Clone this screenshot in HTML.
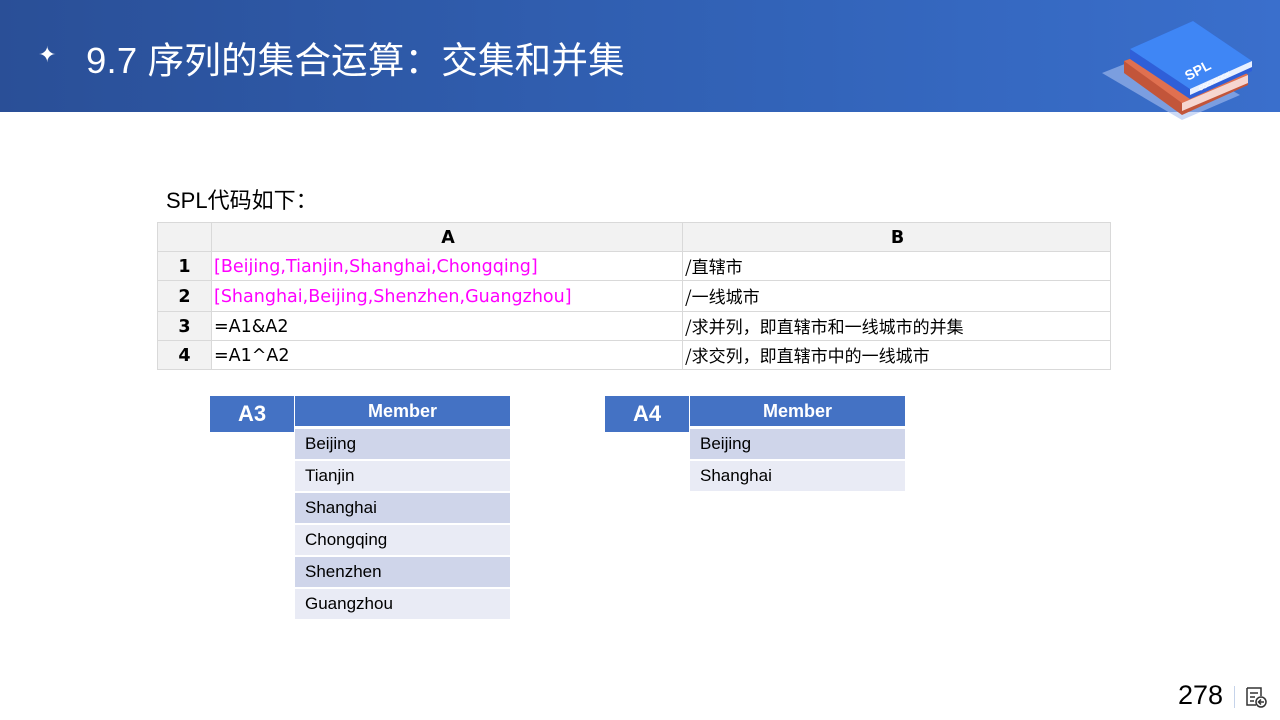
<!DOCTYPE html>
<html><head><meta charset="utf-8"><style>
body{margin:0;width:1280px;height:720px;position:relative;background:#fff;font-family:"Liberation Sans","Noto Sans CJK SC",sans-serif;overflow:hidden}
.hdr{position:absolute;left:0;top:0;width:1280px;height:112px;background:linear-gradient(90deg,#2a4f97 0%,#3263b8 60%,#3a6fcc 100%)}
.title{position:absolute;left:86px;top:31px;color:#fff;font-size:36.5px;white-space:nowrap;letter-spacing:0.2px}
.star{position:absolute;left:38px;top:42px;color:#fff;font-size:22px}
.abs{position:absolute;white-space:nowrap}
table.g{position:absolute;left:157px;top:222px;border-collapse:collapse;font-size:17.5px;font-family:"DejaVu Sans","Noto Sans CJK SC",sans-serif;table-layout:fixed}
table.g td{border:1px solid #d9d9d9;padding:2px 0 0 2px;height:26px;line-height:26px;vertical-align:middle;white-space:nowrap;overflow:hidden}
table.g td.c{font-family:"Noto Sans CJK SC",sans-serif;font-size:17px;padding-top:0}
table.g td.n{background:#f2f2f2;text-align:center;font-weight:bold;padding:2px 0 0 0}
table.g tr.h td{background:#f2f2f2;text-align:center;font-weight:bold}
.m{color:#f0f}
.box{position:absolute;background:#4472c4;color:#fff;font-weight:bold;text-align:center}
.r{position:absolute;width:215px;height:30px;line-height:30px;padding-left:10px;box-sizing:border-box;font-size:17px;color:#000}
.d{background:#cfd5ea}.l{background:#e9ebf5}
</style></head><body>
<div class="hdr"></div>
<div class="star">✦</div>
<div class="title">9.7 序列的集合运算：交集和并集</div>
<svg class="abs" style="left:1100px;top:15px" width="160" height="110" viewBox="0 0 160 110">
<polygon points="2,58 60,35 140,80 82,105" fill="#a9bff0" opacity="0.6"/>
<polygon points="24,46 100,20 148,60 148,70 82,100 24,58" fill="#c2553a"/>
<polygon points="24,46 100,20 148,60 82,88" fill="#e07050"/>
<polygon points="82,88 148,60 148,68 82,96" fill="#f6d6d0"/>
<polygon points="30,34 93,6 152,46 152,56 90,84 30,44" fill="#2f5fd8"/>
<polygon points="30,34 93,6 152,46 90,74" fill="#3f86f5"/>
<polygon points="90,74 152,46 152,52 90,80" fill="#e8f0ff"/>
<text x="88" y="66" fill="#fff" font-size="14" font-weight="bold" transform="rotate(-28 88 66)" font-family="Liberation Sans">SPL</text>
<text x="100" y="76" fill="#fff" font-size="6" transform="rotate(-28 100 76)" font-family="Liberation Sans">COOKBOOK</text>
</svg>
<div class="abs" style="left:166px;top:183px;font-size:22px">SPL代码如下：</div>
<table class="g">
<colgroup><col style="width:54px"><col style="width:471px"><col style="width:428px"></colgroup>
<tr class="h"><td></td><td>A</td><td>B</td></tr>
<tr><td class="n">1</td><td class="m">[Beijing,Tianjin,Shanghai,Chongqing]</td><td class="c">/直辖市</td></tr>
<tr><td class="n" style="height:28px">2</td><td class="m">[Shanghai,Beijing,Shenzhen,Guangzhou]</td><td class="c">/一线城市</td></tr>
<tr><td class="n">3</td><td>=A1&amp;A2</td><td class="c">/求并列，即直辖市和一线城市的并集</td></tr>
<tr><td class="n" style="height:25px">4</td><td>=A1^A2</td><td class="c">/求交列，即直辖市中的一线城市</td></tr>
</table>
<div class="box" style="left:210px;top:396px;width:84px;height:36px;line-height:36px;font-size:22px">A3</div>
<div class="box" style="left:295px;top:396px;width:215px;height:30px;line-height:30px;font-size:18px">Member</div>
<div class="r d" style="left:295px;top:429px">Beijing</div>
<div class="r l" style="left:295px;top:461px">Tianjin</div>
<div class="r d" style="left:295px;top:493px">Shanghai</div>
<div class="r l" style="left:295px;top:525px">Chongqing</div>
<div class="r d" style="left:295px;top:557px">Shenzhen</div>
<div class="r l" style="left:295px;top:589px">Guangzhou</div>
<div class="box" style="left:605px;top:396px;width:84px;height:36px;line-height:36px;font-size:22px">A4</div>
<div class="box" style="left:690px;top:396px;width:215px;height:30px;line-height:30px;font-size:18px">Member</div>
<div class="r d" style="left:690px;top:429px">Beijing</div>
<div class="r l" style="left:690px;top:461px">Shanghai</div>
<div class="abs" style="left:1178px;top:680px;font-size:27px">278</div>
<div class="abs" style="left:1234px;top:686px;width:1px;height:22px;background:#c5d3ea"></div>
<svg class="abs" style="left:1245px;top:686px" width="22" height="22" viewBox="0 0 22 22" fill="none" stroke="#333" stroke-width="1.5"><path d="M2 2h14v8M2 2v17h9M5 7h8M5 11h5M5 15h4"/><circle cx="16" cy="16" r="5"/><path d="M19 16h-5M16 13.5l-2.5 2.5 2.5 2.5"/></svg>
</body></html>
